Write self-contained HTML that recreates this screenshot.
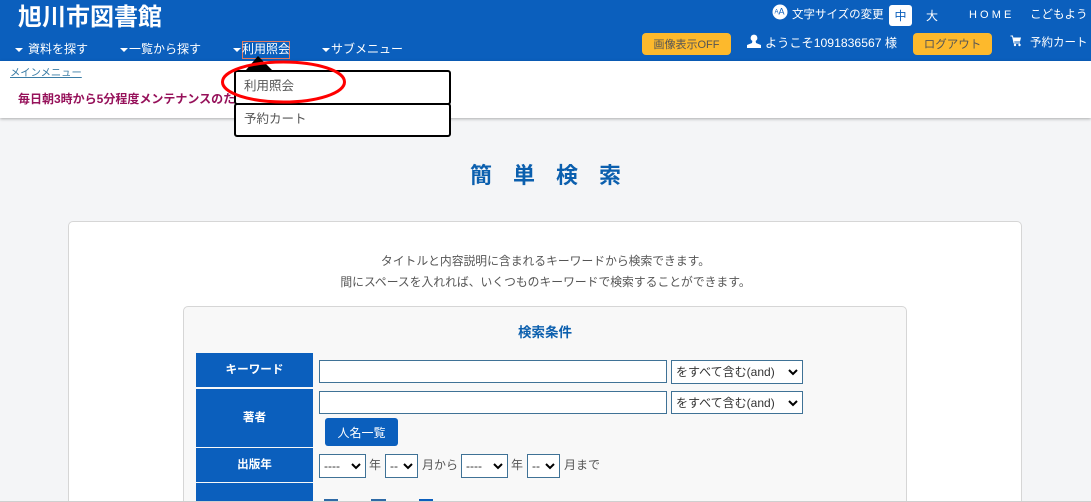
<!DOCTYPE html>
<html lang="ja"><head><meta charset="utf-8"><title>旭川市図書館</title>
<style>
html,body{margin:0;padding:0;width:1091px;height:502px;overflow:hidden}
#p{position:relative;width:1091px;height:502px;overflow:hidden;background:#f4f5f7;font-family:"Liberation Sans","Noto Sans CJK JP",sans-serif;color:#444;font-size:12px}
.a{position:absolute;white-space:nowrap;line-height:1}
.w{color:#fff}
.box{position:absolute;box-sizing:border-box}
.th{position:absolute;left:196px;width:117px;background:#0b5fbd;color:#fff;font-weight:bold;font-size:11.6px;display:flex;align-items:center;justify-content:center;padding-bottom:2px;box-sizing:border-box}
.in{position:absolute;box-sizing:border-box;background:#fff;border:1px solid #3f7296;height:23px}
.sel{position:absolute;box-sizing:border-box;background:#fff;border:1px solid #3f7296;height:24px;font-size:12px;color:#333;padding:5px 0 0 4px;line-height:1;white-space:nowrap}
.sel svg{position:absolute;right:4px;top:8px}
.btn{position:absolute;box-sizing:border-box;background:#fdb92c;border-radius:4px;color:#555;display:flex;align-items:center;justify-content:center;height:22px;padding-bottom:1px}
</style></head><body><div id="p">

<div class="box" style="left:0;top:0;width:1091px;height:61px;background:#0b5fbd"></div>
<div class="box" style="left:0;top:61px;width:1091px;height:57px;background:#fff;box-shadow:0 1px 3px rgba(0,0,0,.3)"></div>

<div class="a w" style="left:18px;top:6px;font-size:24px;font-weight:bold">旭川市図書館</div>

<svg class="a" style="left:15px;top:48px" width="9" height="5"><path d="M0 0h8L4 4z" fill="#fff"/></svg>
<div class="a w" style="left:28px;top:43px;font-size:12px">資料を探す</div>
<svg class="a" style="left:120px;top:48px" width="9" height="5"><path d="M0 0h8L4 4z" fill="#fff"/></svg>
<div class="a w" style="left:129px;top:43px;font-size:12px">一覧から探す</div>
<svg class="a" style="left:233px;top:48px" width="9" height="5"><path d="M0 0h8L4 4z" fill="#fff"/></svg>
<div class="box" style="left:242px;top:41px;width:48px;height:18px;border:1px solid #e2795f"></div>
<div class="a w" style="left:242px;top:43px;font-size:12px">利用照会</div>
<svg class="a" style="left:322px;top:48px" width="9" height="5"><path d="M0 0h8L4 4z" fill="#fff"/></svg>
<div class="a w" style="left:331px;top:43px;font-size:12px">サブメニュー</div>

<svg class="a" style="left:772px;top:4px" width="17" height="17"><circle cx="8" cy="8" r="7.5" fill="#fff"/><text x="2.5" y="9.5" font-size="6" fill="#0b5fbd" font-family="Liberation Sans">A</text><text x="6.5" y="10.5" font-size="9" fill="#0b5fbd" font-family="Liberation Sans">A</text></svg>
<div class="a w" style="left:792px;top:10px;font-size:11.5px">文字サイズの変更</div>
<div class="box" style="left:889px;top:5px;width:23px;height:21px;background:#fff;border-radius:3px;color:#0b5fbd;font-size:12px;text-align:center;line-height:22px">中</div>
<div class="a w" style="left:926px;top:10px;font-size:12px">大</div>
<div class="a w" style="left:969px;top:10px;font-size:11px;letter-spacing:3.1px">HOME</div>
<div class="a w" style="left:1030px;top:10px;font-size:11.5px">こどもよう</div>

<div class="btn" style="left:642px;top:33px;width:89px;font-size:11px">画像表示OFF</div>
<svg class="a" style="left:746px;top:34px" width="16" height="14"><circle cx="8" cy="4" r="3.4" fill="#fff"/><path d="M6.5 6h3l.5 3 5 2v3H1v-3l5-2z" fill="#fff"/></svg>
<div class="a w" style="left:765px;top:37px;font-size:12.2px">ようこそ1091836567 様</div>
<div class="btn" style="left:913px;top:33px;width:79px;font-size:11.5px">ログアウト</div>
<svg class="a" style="left:1010px;top:35px" width="12" height="12"><path d="M.5 1H2.5L4 8h6" fill="none" stroke="#fff" stroke-width="1"/><path d="M3 2.5h8L10 6.500H4z" fill="#fff"/><circle cx="5" cy="10" r="1.200" fill="#fff"/><circle cx="9.500" cy="10" r="1.200" fill="#fff"/></svg>
<div class="a w" style="left:1030px;top:38px;font-size:11.5px">予約カート</div>

<div class="a" style="left:10px;top:69px;font-size:10.3px;color:#3a7ca5;text-decoration:underline">メインメニュー</div>
<div class="a" style="left:18px;top:93px;font-size:12px;font-weight:bold;color:#96115a">毎日朝3時から5分程度メンテナンスのた</div>

<div class="a" style="left:470px;top:165px;font-size:22px;font-weight:bold;color:#0b5fae;letter-spacing:21px">簡単検索</div>

<div class="box" style="left:68px;top:221px;width:954px;height:300px;background:#fff;border:1px solid #d6d6d6;border-radius:5px"></div>
<div class="a" style="left:0;width:1091px;top:256px;text-align:center;font-size:11.8px;color:#555">タイトルと内容説明に含まれるキーワードから検索できます。</div>
<div class="a" style="left:0;width:1091px;top:277px;text-align:center;font-size:11.8px;color:#555">間にスペースを入れれば、いくつものキーワードで検索することができます。</div>

<div class="box" style="left:183px;top:306px;width:724px;height:220px;background:#f8f8f8;border:1px solid #d6d6d6;border-radius:5px"></div>
<div class="a" style="left:183px;width:724px;top:326px;text-align:center;font-size:13.5px;font-weight:bold;color:#0b5fae">検索条件</div>

<div class="th" style="top:353px;height:34px">キーワード</div>
<div class="th" style="top:389px;height:58px;padding-bottom:3px">著者</div>
<div class="th" style="top:448px;height:34px">出版年</div>
<div class="th" style="top:483px;height:30px"></div>

<div class="in" style="left:319px;top:360px;width:348px"></div>
<div class="sel" style="left:671px;top:360px;width:132px">をすべて含む(and)<svg width="10" height="7"><path d="M1 1l4 4 4-4" fill="none" stroke="#000" stroke-width="2"/></svg></div>
<div class="in" style="left:319px;top:391px;width:348px"></div>
<div class="sel" style="left:671px;top:391px;width:132px;height:23px">をすべて含む(and)<svg width="10" height="7"><path d="M1 1l4 4 4-4" fill="none" stroke="#000" stroke-width="2"/></svg></div>
<div class="box" style="left:325px;top:418px;width:73px;height:28px;background:#0b5fbd;border-radius:3px;color:#fff;font-size:12px;text-align:center;line-height:30px">人名一覧</div>

<div class="sel" style="left:319px;top:454px;width:47px">----<svg width="10" height="7"><path d="M1 1l4 4 4-4" fill="none" stroke="#000" stroke-width="2"/></svg></div>
<div class="a" style="left:369px;top:459px;font-size:12px;color:#555">年</div>
<div class="sel" style="left:385px;top:454px;width:33px">--<svg width="10" height="7"><path d="M1 1l4 4 4-4" fill="none" stroke="#000" stroke-width="2"/></svg></div>
<div class="a" style="left:422px;top:459px;font-size:12px;color:#555">月から</div>
<div class="sel" style="left:461px;top:454px;width:47px">----<svg width="10" height="7"><path d="M1 1l4 4 4-4" fill="none" stroke="#000" stroke-width="2"/></svg></div>
<div class="a" style="left:511px;top:459px;font-size:12px;color:#555">年</div>
<div class="sel" style="left:527px;top:454px;width:33px">--<svg width="10" height="7"><path d="M1 1l4 4 4-4" fill="none" stroke="#000" stroke-width="2"/></svg></div>
<div class="a" style="left:564px;top:459px;font-size:12px;color:#555">月まで</div>

<div class="box" style="left:324px;top:499px;width:14px;height:3px;background:#2e6aa6"></div>
<div class="box" style="left:371px;top:499px;width:15px;height:3px;background:#2e6aa6"></div>
<div class="box" style="left:419px;top:499px;width:14px;height:3px;background:#0b5fbd"></div>

<div class="box" style="left:0;top:501px;width:1091px;height:1px;background:#cfcfcf"></div>

<svg class="a" style="left:240px;top:56px" width="40" height="16"><path d="M18 0L6 14h26z" fill="#000"/></svg>
<div class="box" style="left:234px;top:70px;width:217px;height:35px;background:#fff;border:2px solid #000;border-radius:3px"></div>
<div class="box" style="left:234px;top:103px;width:217px;height:34px;background:#fff;border:2px solid #000;border-radius:3px"></div>
<div class="a" style="left:244px;top:80px;font-size:12.5px;color:#555">利用照会</div>
<div class="a" style="left:244px;top:113px;font-size:12.5px;color:#555">予約カート</div>
<svg class="a" style="left:218px;top:59px" width="132" height="48"><ellipse cx="65.5" cy="23" rx="61" ry="20" fill="none" stroke="#f00" stroke-width="3"/></svg>
</div></body></html>
